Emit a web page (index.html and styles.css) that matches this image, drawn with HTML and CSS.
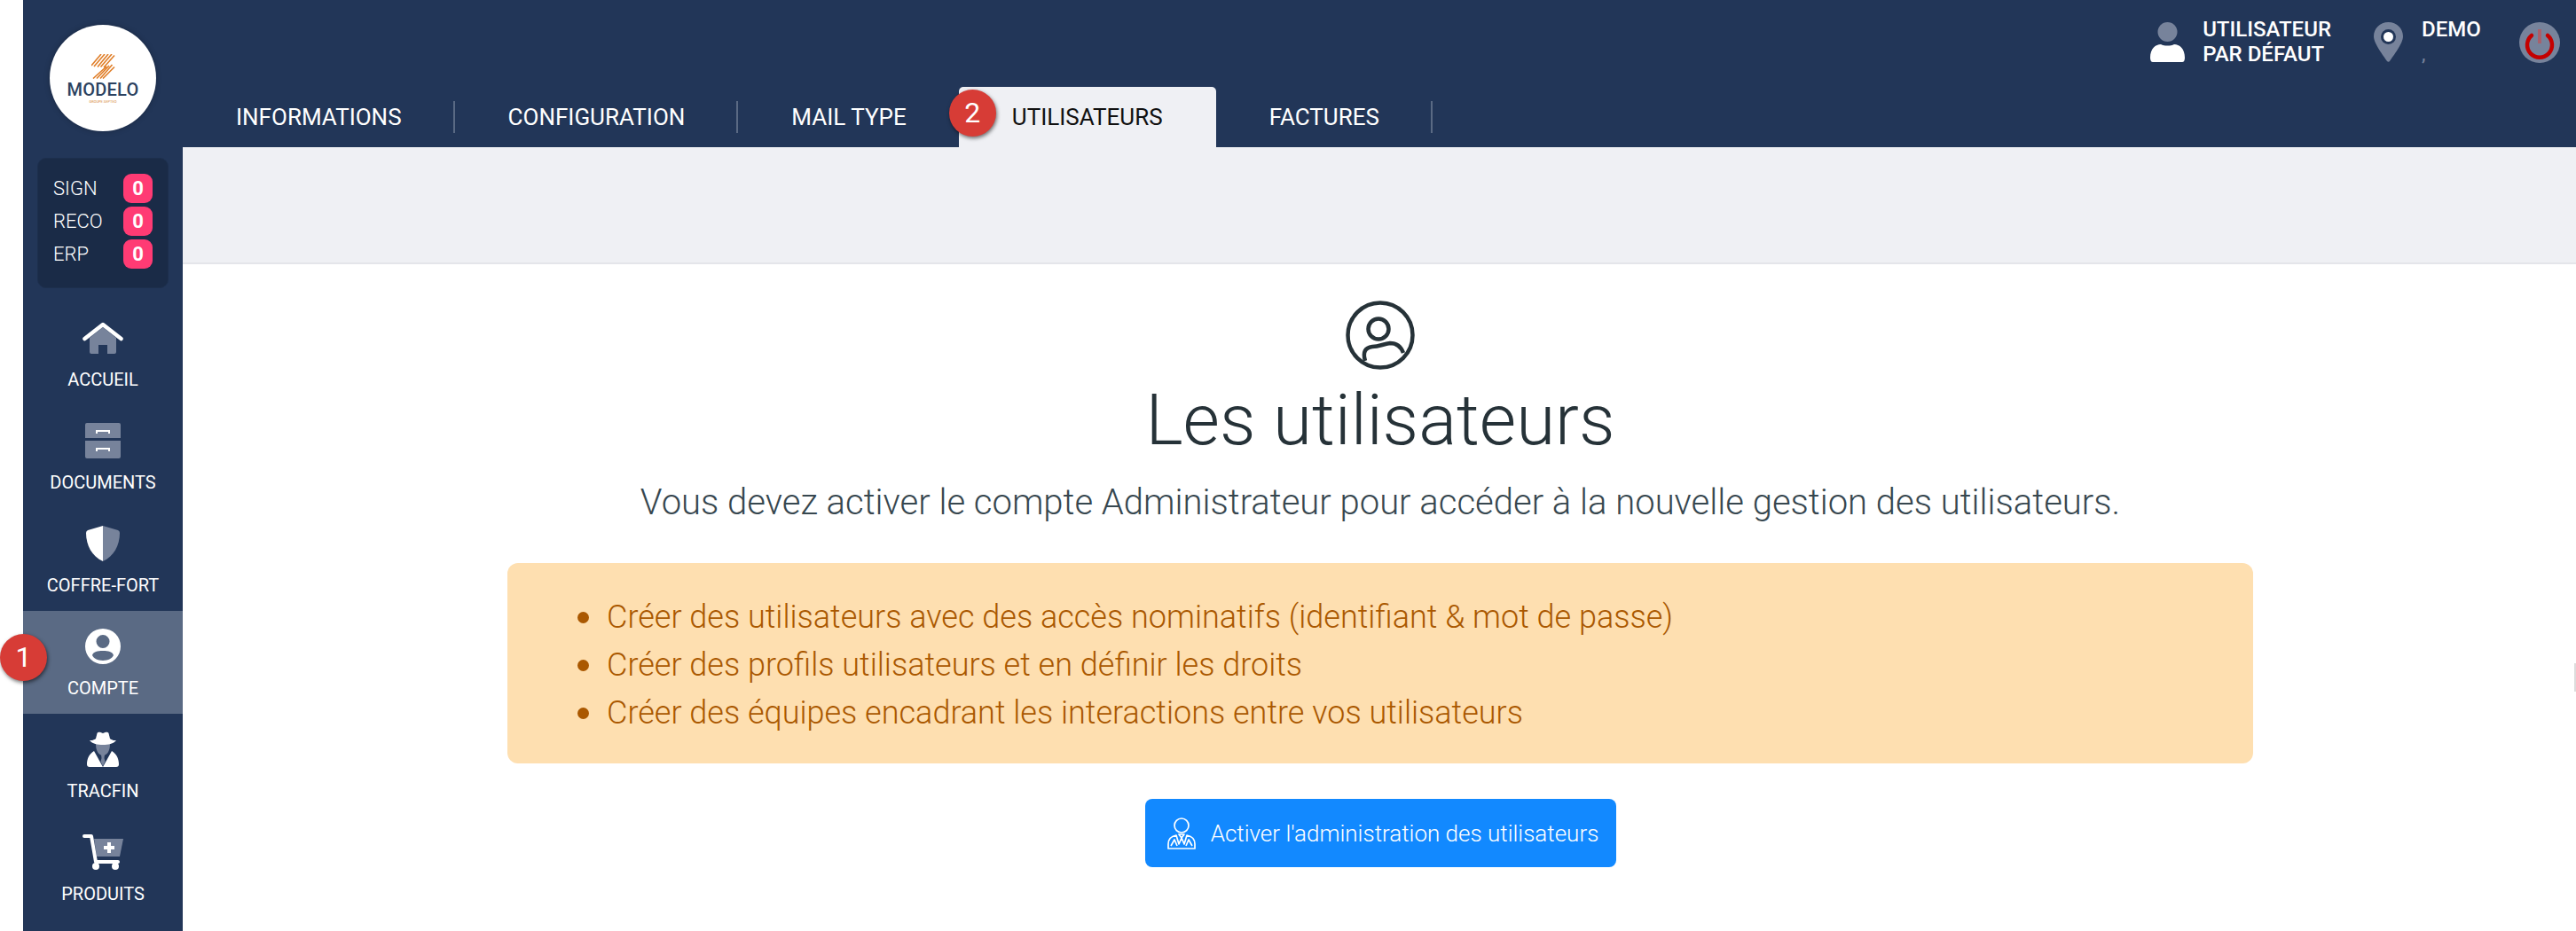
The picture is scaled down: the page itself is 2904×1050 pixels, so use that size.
FILE: index.html
```html
<!DOCTYPE html>
<html lang="fr">
<head>
  <meta charset="UTF-8">
  <title>Les utilisateurs</title>
  <link rel="stylesheet" href="styles.css">
</head>
<body>

<div class="app">
  <aside class="sidebar">
    <div class="logo">
      <svg class="logo-mark" viewBox="0 0 27 28" width="27" height="28">
        <path fill="none" stroke="#e07f2a" stroke-width="1.6" d="M11 0 L0 13 M15 0 L3 14 M19 0 L7 14.5 M23 0 L10.5 14.5 M26 1.5 L14 15 M17 14 L2 27.5 M20 13 L6 27.5 M23.5 12 L10 27.5 M26 14.5 L13 27.5"/>
      </svg>
      <div class="logo-name">MODELO</div>
      <div class="logo-sub">GROUPE SEPTEO</div>
    </div>

    <div class="counters">
      <div class="counter"><span>SIGN</span><b>0</b></div>
      <div class="counter"><span>RECO</span><b>0</b></div>
      <div class="counter"><span>ERP</span><b>0</b></div>
    </div>

    <nav class="nav">
      <a class="nav-item">
        <svg viewBox="0 0 46 36" width="46" height="36">
          <path d="M8 18 L23 6 L38 18 V34 a2 2 0 0 1 -2 2 H28 V26 H18 V36 H10 a2 2 0 0 1 -2 -2 Z" fill="#77839b"/>
          <path d="M2.5 19 L23 3 L43.5 19" fill="none" stroke="#fff" stroke-width="4.5" stroke-linecap="round" stroke-linejoin="round"/>
        </svg>
        <span>ACCUEIL</span>
      </a>
      <a class="nav-item">
        <svg viewBox="0 0 40 40" width="40" height="40">
          <path d="M2 0 H38 a2 2 0 0 1 2 2 V17 H0 V2 a2 2 0 0 1 2 -2 Z M0 20 H40 V38 a2 2 0 0 1 -2 2 H2 a2 2 0 0 1 -2 -2 Z" fill="#77839b"/>
          <path d="M13 12 V9 H27 V12 M13 32 V29 H27 V32" fill="none" stroke="#fff" stroke-width="2"/>
        </svg>
        <span>DOCUMENTS</span>
      </a>
      <a class="nav-item">
        <svg viewBox="0 0 38 40" width="38" height="40">
          <path d="M19 0 L36 5 Q38 6 38 8 C38 22 31 35 19 40 Z" fill="#77839b"/>
          <path d="M19 0 L2 5 Q0 6 0 8 C0 22 7 35 19 40 Z" fill="#fff"/>
        </svg>
        <span>COFFRE-FORT</span>
      </a>
      <a class="nav-item active">
        <svg viewBox="0 0 40 40" width="40" height="40">
          <path fill="#fff" fill-rule="evenodd" d="M20 0 a20 20 0 1 0 0 40 a20 20 0 1 0 0 -40 Z M20 7 a7.5 7.5 0 1 1 0 15 a7.5 7.5 0 1 1 0 -15 Z M20 36 C14 36 9 33 8 30 C9 26 14 25 20 25 C26 25 31 26 32 30 C31 33 26 36 20 36 Z"/>
        </svg>
        <span>COMPTE</span>
      </a>
      <a class="nav-item">
        <svg viewBox="0 0 36 40" width="36" height="40">
          <path d="M10 14 C10 23 14 27 18 27 C22 27 26 23 26 14 Z" fill="#77839b"/>
          <path d="M3 10 C6 10.5 9 9 10 8 L11.5 2 C13 0 15 1 18 2 C21 1 23 0 24.5 2 L26 8 C27 9 30 10.5 33 10 C30 14 24 15 18 15 C12 15 6 14 3 10 Z" fill="#fff"/>
          <path d="M8 22 L18 40 H3 a3 3 0 0 1 -3 -3 C0 30 3 25 8 22 Z M28 22 L18 40 H33 a3 3 0 0 0 3 -3 C36 30 33 25 28 22 Z" fill="#fff"/>
          <path d="M16 26 H20 L19.5 30 L20.5 34 L18 39 L15.5 34 L16.5 30 Z" fill="#77839b"/>
        </svg>
        <span>TRACFIN</span>
      </a>
      <a class="nav-item">
        <svg viewBox="0 0 46 40" width="46" height="40">
          <path d="M13 5 H46 L42 25 H16 Z" fill="#77839b"/>
          <path d="M28 9 H32 V13 H36 V17 H32 V21 H28 V17 H24 V13 H28 Z" fill="#fff"/>
          <path d="M2 2 H10 L15 31 H40" fill="none" stroke="#fff" stroke-width="4" stroke-linecap="round" stroke-linejoin="round"/>
          <circle cx="15" cy="36" r="4" fill="#fff"/>
          <circle cx="37" cy="36" r="4" fill="#fff"/>
        </svg>
        <span>PRODUITS</span>
      </a>
    </nav>
    <div class="step step-one">1</div>
  </aside>

  <div class="main">
    <header class="topbar">
      <div class="user-bar">
        <svg viewBox="0 0 39 45" width="39" height="45">
          <circle cx="19.5" cy="11" r="11" fill="#77839b"/>
          <path d="M0 40 C0 30 6 25 12 25 C16 27 23 27 27 25 C33 25 39 30 39 40 C39 43 38 45 36 45 H3 C1 45 0 43 0 40 Z" fill="#fff"/>
        </svg>
        <div class="user-text">UTILISATEUR<br>PAR DÉFAUT</div>
        <svg class="pin" viewBox="0 0 33 45" width="33" height="45">
          <path fill="#77839b" d="M16.5 0 C7 0 0 7 0 16 C0 24 11 38 15 44 Q16.5 45.5 18 44 C22 38 33 24 33 16 C33 7 26 0 16.5 0 Z"/>
          <circle cx="16.5" cy="16.5" r="8.5" fill="#223658"/>
          <circle cx="16.5" cy="16.5" r="5.5" fill="#fff"/>
        </svg>
        <div class="site-text">DEMO<small>,</small></div>
        <div class="power">
          <svg viewBox="0 0 46 46" width="46" height="46">
            <path d="M14 15 A14 14 0 1 0 32 15" fill="none" stroke="#c40000" stroke-width="4.5" stroke-linecap="round"/>
            <rect x="21" y="8" width="4" height="16" fill="#a9606b"/>
          </svg>
        </div>
      </div>
      <div class="tabs">
        <a class="tab">INFORMATIONS</a>
        <a class="tab">CONFIGURATION</a>
        <a class="tab no-line">MAIL TYPE</a>
        <a class="tab current">UTILISATEURS<span class="step step-two">2</span></a>
        <a class="tab">FACTURES</a>
      </div>
    </header>

    <div class="band"></div>

    <section class="content">
      <svg class="hero-icon" viewBox="0 0 78 78" width="78" height="78">
        <g fill="none" stroke="#263238" stroke-width="4.5">
          <circle cx="39" cy="39" r="36.5"/>
          <circle cx="37" cy="32" r="11.5"/>
          <path d="M22 68 C19 58 22 53 30 52 C38 52 42 49 50 48 C56 48 62 51 65 59"/>
        </g>
      </svg>
      <h1>Les utilisateurs</h1>
      <p class="lead">Vous devez activer le compte Administrateur pour accéder à la nouvelle gestion des utilisateurs.</p>
      <div class="notice">
        <ul>
          <li>Créer des utilisateurs avec des accès nominatifs (identifiant &amp; mot de passe)</li>
          <li>Créer des profils utilisateurs et en définir les droits</li>
          <li>Créer des équipes encadrant les interactions entre vos utilisateurs</li>
        </ul>
      </div>
      <button class="activate-btn">
        <svg viewBox="0 0 32 36" width="32" height="36">
          <g fill="none" stroke="#fff" stroke-width="1.7" stroke-linejoin="round">
            <circle cx="16" cy="9" r="8"/>
            <path d="M1 35 V30 C1 24 5 21 10 20 L13 30 L16 23 L19 30 L22 20 C27 21 31 24 31 30 V35 Z"/>
            <path d="M13 19 H19 L16 23 Z M4 32 L8 25 L11 32 M28 32 L24 25 L21 32"/>
          </g>
        </svg>
        Activer l'administration des utilisateurs
      </button>
    </section>
  </div>
  <div class="edge"></div>
</div>

</body>
</html>
```

FILE: styles.css
```css
* {
  box-sizing: border-box;
}
html, body {
  margin: 0;
  height: 100%;
  background: #fff;
}
body {
  font-family: Roboto, 'Liberation Sans', sans-serif;
  overflow: hidden;
}
.app {
  display: flex;
  height: 1050px;
  padding-left: 26px;
  position: relative;
}

/* sidebar */
.sidebar {
  width: 180px;
  flex: none;
  background: #223658;
  display: flex;
  flex-direction: column;
  align-items: center;
  position: relative;
}
.logo {
  width: 120px;
  height: 120px;
  margin-top: 28px;
  background: #fff;
  border-radius: 50%;
  box-shadow: 0 0 6px rgba(0,0,0,0.25);
  display: flex;
  flex-direction: column;
  align-items: center;
  color: #2c4260;
}
.logo-mark {
  margin-top: 33px;
  flex: none;
}
.logo-name {
  font-size: 20px;
  font-weight: 500;
  line-height: 20px;
  margin-top: 2px;
  letter-spacing: 0.2px;
}
.logo-sub {
  font-size: 4px;
  line-height: 6px;
  margin-top: 1px;
  color: #e0a36a;
  font-weight: 500;
}
.counters {
  width: 148px;
  height: 147px;
  margin-top: 30px;
  padding: 17px 17px 0 17px;
  background: #1a2b47;
  border: 1px solid #1d2f4d;
  border-radius: 10px;
}
.counter {
  display: flex;
  justify-content: space-between;
  align-items: center;
  height: 33px;
  margin-bottom: 4px;
  color: #fff;
  font-size: 22px;
  font-weight: 300;
}
.counter b {
  width: 33px;
  height: 33px;
  border-radius: 9px;
  background: #ff3b74;
  text-align: center;
  line-height: 33px;
  font-weight: 700;
}
.nav {
  width: 100%;
  margin-top: 16px;
}
.nav-item {
  height: 116px;
  display: flex;
  flex-direction: column;
  align-items: center;
  padding-top: 20px;
  color: #fff;
  font-size: 20px;
}
.nav-item svg {
  height: 40px;
  flex: none;
}
.nav-item span {
  margin-top: 16px;
  line-height: 22px;
}
.nav-item.active {
  background: #5a6a84;
}
.step {
  position: absolute;
  width: 53px;
  height: 53px;
  border-radius: 50%;
  background: #d73c36;
  color: #fff;
  font-size: 32px;
  line-height: 53px;
  text-align: center;
  box-shadow: 1px 2px 4px rgba(0,0,0,0.55);
}
.step-one {
  left: -26px;
  top: 715px;
}

/* top */
.main {
  flex: 1;
  min-width: 0;
  display: flex;
  flex-direction: column;
}
.topbar {
  height: 166px;
  flex: none;
  background: #223658;
  position: relative;
  display: flex;
  align-items: flex-end;
}
.user-bar {
  position: absolute;
  top: 25px;
  right: 18px;
  display: flex;
  color: #fff;
  font-size: 24px;
  font-weight: 500;
  line-height: 28px;
}
.user-text {
  margin: -6px 0 0 20px;
}
.pin {
  margin-left: 48px;
}
.site-text {
  margin: -6px 0 0 21px;
  width: 110px;
}
.site-text small {
  display: block;
  font-size: 20px;
  color: #77839b;
}
.power {
  width: 46px;
  height: 46px;
  border-radius: 50%;
  background: #77839b;
}
.tabs {
  display: flex;
  align-items: stretch;
  height: 68px;
}
.tab {
  position: relative;
  padding: 20px 60px 0;
  color: #fff;
  font-size: 26px;
  line-height: 28px;
}
.tab::after {
  content: "";
  position: absolute;
  right: 0;
  top: 16px;
  width: 2px;
  height: 36px;
  background: #5a6a84;
}
.tab.no-line {
  padding-right: 59px;
}
.tab.no-line::after,
.tab.current::after {
  display: none;
}
.tab.current {
  background: #eff0f4;
  color: #111;
  border-radius: 5px 5px 0 0;
}
.step-two {
  left: -11px;
  top: 3px;
}

/* content */
.band {
  height: 132px;
  flex: none;
  background: #eff0f4;
  border-bottom: 2px solid #e4e5ea;
}
.content {
  display: flex;
  flex-direction: column;
  align-items: center;
  padding: 41px 0 0 2px;
  color: #263238;
}
.hero-icon {
  flex: none;
}
h1 {
  margin: 10px 0 0;
  font-size: 80px;
  font-weight: 300;
  line-height: 94px;
}
.lead {
  margin: 22px 0 0;
  font-size: 40px;
  font-weight: 300;
  line-height: 48px;
  color: #37474f;
}
.notice {
  width: 1968px;
  height: 226px;
  margin-top: 44px;
  background: #fedfb0;
  border-radius: 12px;
  color: #aa5800;
  font-size: 36px;
  font-weight: 300;
  line-height: 54px;
  padding-top: 34px;
}
.notice ul {
  margin: 0;
  padding: 0 0 0 112px;
  list-style: none;
}
.notice li {
  position: relative;
}
.notice li::before {
  content: "";
  position: absolute;
  left: -33px;
  top: 21px;
  width: 13px;
  height: 13px;
  border-radius: 50%;
  background: #aa5800;
}
.activate-btn {
  margin-top: 40px;
  width: 531px;
  height: 77px;
  padding: 0 0 0 6px;
  border: none;
  border-radius: 8px;
  background: #1289ff;
  color: #fff;
  font-family: inherit;
  font-size: 26px;
  font-weight: 300;
  display: flex;
  align-items: center;
  justify-content: center;
  gap: 17px;
}
.edge {
  position: absolute;
  right: 0;
  top: 748px;
  width: 2px;
  height: 32px;
  background: #ddd;
}
```
